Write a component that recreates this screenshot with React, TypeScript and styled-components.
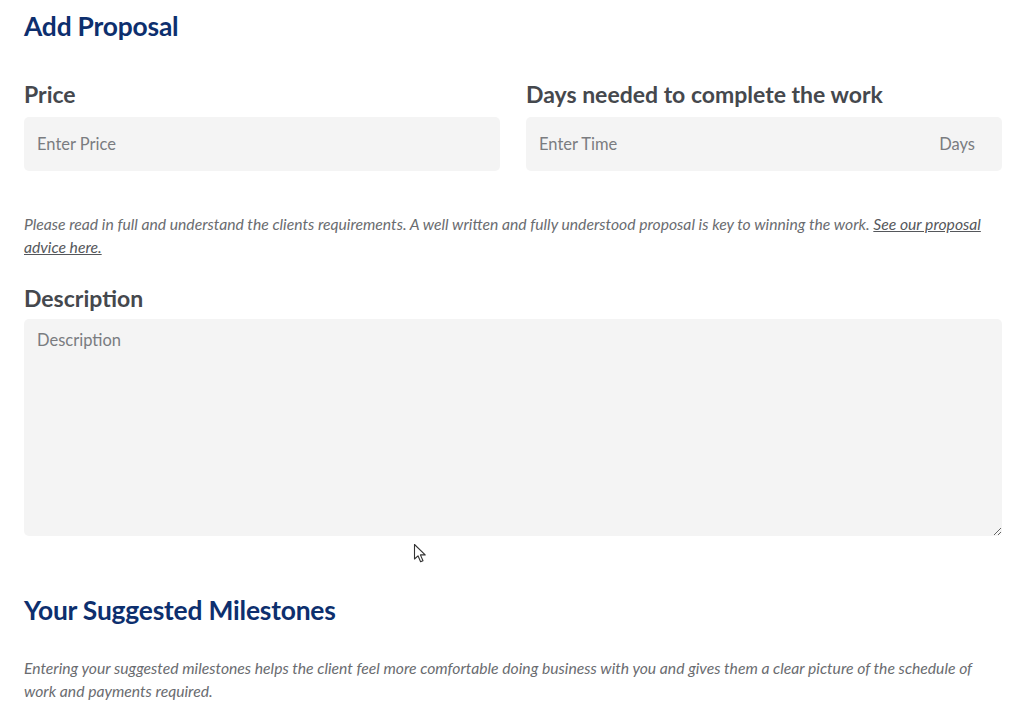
import React from "react";
import styled, { createGlobalStyle } from "styled-components";

const Global = createGlobalStyle`
  html, body { margin: 0; padding: 0; background: #ffffff; }
  body { font-family: Lato, "Noto Sans", sans-serif; }
  * { box-sizing: border-box; }
`;

const Page = styled.div`
  position: relative;
  width: 1020px;
  min-height: 723px;
  padding: 8px 18px 0 24px;
`;

const Title = styled.h1`
  margin: 0;
  font-size: 26.4px;
  line-height: 36px;
  font-weight: 700;
  color: #0d2f6e;
  letter-spacing: -0.2px;
`;

const Row = styled.div`
  display: grid;
  grid-template-columns: 1fr 1fr;
  column-gap: 26px;
  margin-top: 35px;
`;

const Field = styled.div`
  display: flex;
  flex-direction: column;
`;

const Label = styled.label<{ $gap?: number }>`
  font-size: 23px;
  line-height: 30px;
  font-weight: 700;
  color: #45484d;
  margin-bottom: ${(p) => p.$gap ?? 8}px;
`;

const InputBox = styled.div`
  display: flex;
  align-items: center;
  height: 54px;
  background: #f4f4f4;
  border-radius: 5px;
  padding: 0 27px 0 13px;
`;

const Input = styled.input`
  flex: 1;
  border: none;
  background: transparent;
  outline: none;
  font-family: inherit;
  font-size: 16.5px;
  color: #333;
  padding: 0;
  &::placeholder { color: #7a7c80; }
`;

const Suffix = styled.span`
  font-size: 16.5px;
  color: #7a7c80;
`;

const Note = styled.p<{ $top: number }>`
  margin: ${(p) => p.$top}px 0 0 0;
  font-size: 15.7px;
  line-height: 23px;
  font-style: italic;
  color: #6a6c70;
  a { color: #55575b; text-decoration: underline; }
`;

const Section = styled.div`
  display: flex;
  flex-direction: column;
  margin-top: 24px;
`;

const TextArea = styled.textarea`
  height: 217px;
  background: #f4f4f4;
  border: none;
  border-radius: 5px;
  padding: 11px 13px;
  font-family: inherit;
  font-size: 16.5px;
  resize: vertical;
  outline: none;
  &::placeholder { color: #7a7c80; }
`;

const SubTitle = styled.h2`
  margin: 56px 0 0 0;
  font-size: 26.4px;
  line-height: 36px;
  font-weight: 700;
  color: #0d2f6e;
  letter-spacing: -0.2px;
`;

const Cursor = styled.svg`
  position: absolute;
  left: 413px;
  top: 543px;
`;

export default function App() {
  return (
    <Page>
      <Global />
      <Title>Add Proposal</Title>
      <Row>
        <Field>
          <Label>Price</Label>
          <InputBox>
            <Input placeholder="Enter Price" />
          </InputBox>
        </Field>
        <Field>
          <Label>Days needed to complete the work</Label>
          <InputBox>
            <Input placeholder="Enter Time" />
            <Suffix>Days</Suffix>
          </InputBox>
        </Field>
      </Row>
      <Note $top={42}>
        Please read in full and understand the clients requirements. A well written and fully understood proposal is key to winning the work.{" "}
        <a href="#">See our proposal advice here.</a>
      </Note>
      <Section>
        <Label $gap={6}>Description</Label>
        <TextArea placeholder="Description" />
      </Section>
      <SubTitle>Your Suggested Milestones</SubTitle>
      <Note $top={29}>
        Entering your suggested milestones helps the client feel more comfortable doing business with you and gives them a clear picture of the schedule of work and payments required.
      </Note>
      <Cursor width="14" height="22" viewBox="0 0 14 22">
        <path d="M1.5 1.5 L1.5 16 L5 12.8 L7.6 18.8 L10 17.8 L7.4 11.9 L12.2 11.9 Z" fill="#fff" stroke="#333" strokeWidth="1.1" strokeLinejoin="round" />
      </Cursor>
    </Page>
  );
}
